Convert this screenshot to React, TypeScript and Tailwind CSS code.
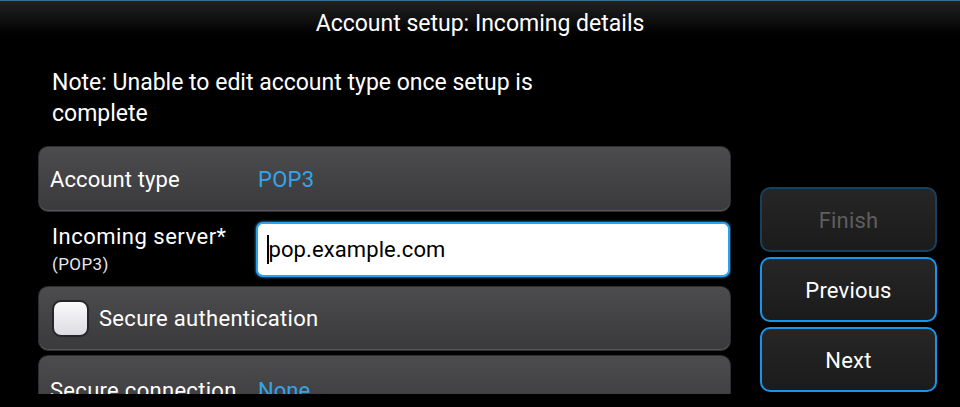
import React from "react";

function Row({ children, className = "" }: { children: React.ReactNode; className?: string }) {
  return (
    <div
      className={`flex items-center rounded-[10px] border border-[#2e2e30] bg-gradient-to-b from-[#4c4c4e] to-[#3a3a3c] shadow-[inset_0_-1px_0_#5a5a5c] ${className}`}
    >
      {children}
    </div>
  );
}

function Btn({ label, disabled = false }: { label: string; disabled?: boolean }) {
  return (
    <div
      className={`flex h-[65px] items-center justify-center rounded-[10px] border-2 bg-gradient-to-b from-[#262626] to-[#1b1b1b] pt-[2px] text-[22px] tracking-[0.2px] ${
        disabled ? "border-[#17405e] text-[#5e5e5e]" : "border-[#1795e8] text-white"
      }`}
    >
      {label}
    </div>
  );
}

export default function App() {
  return (
    <div
      className="relative h-[407px] w-[960px] overflow-hidden bg-black text-white"
      style={{ fontFamily: "Roboto, 'Noto Sans', sans-serif" }}
    >
      <div className="h-[46px] border-t border-[#3c6e90] bg-gradient-to-b from-[#222222] via-[#0c0c0c] to-black">
        <div className="pt-[8px] text-center text-[23px] leading-[30px]">
          Account setup: Incoming details
        </div>
      </div>
      <div className="flex">
        <div className="ml-[38px] flex h-[348px] w-[693px] flex-col overflow-hidden">
          <div className="mt-[21px] pl-[14px] text-[23px] leading-[31px]">
            Note: Unable to edit account type once setup is
            <br />
            complete
          </div>
          <Row className="mt-[17px] h-[66px] shrink-0">
            <span className="ml-[11px] w-[208px] text-[22px] tracking-[0.1px]">Account type</span>
            <span className="text-[22px] tracking-[0.3px] text-[#35a4ea]">POP3</span>
          </Row>
          <div className="flex h-[74px] shrink-0 items-center">
            <div className="ml-[14px] w-[204px]">
              <div className="text-[22px] leading-[26px] tracking-[0.5px]">Incoming server*</div>
              <div className="mt-[3px] text-[17px] leading-[22px] tracking-[0.4px] text-[#e8e8e8]">(POP3)</div>
            </div>
            <div className="flex h-[55px] w-[474px] items-center rounded-[7px] border-2 border-[#2aa2f2] bg-white shadow-[0_0_3px_#4fb4f5]">
              <span className="ml-[9px] h-[29px] w-[1.5px] bg-black" />
              <span className="text-[22px] tracking-[0.1px] text-black">pop.example.com</span>
            </div>
          </div>
          <Row className="h-[65px] shrink-0">
            <div className="ml-[13px] h-[37px] w-[37px] rounded-[9px] border-2 border-[#262628] bg-gradient-to-b from-[#fbfbfd] to-[#dcdce2]" />
            <span className="ml-[10px] text-[22px] tracking-[0.3px]">Secure authentication</span>
          </Row>
          <Row className="mt-[4px] h-[66px] shrink-0 items-start">
            <span className="ml-[11px] mt-[18px] w-[208px] text-[22px] tracking-[0.3px]">Secure connection</span>
            <span className="mt-[18px] text-[22px] text-[#35a4ea]">None</span>
          </Row>
        </div>
        <div className="ml-[29px] mt-[141px] flex w-[177px] flex-col gap-[5px]">
          <Btn label="Finish" disabled />
          <Btn label="Previous" />
          <Btn label="Next" />
        </div>
      </div>
    </div>
  );
}
